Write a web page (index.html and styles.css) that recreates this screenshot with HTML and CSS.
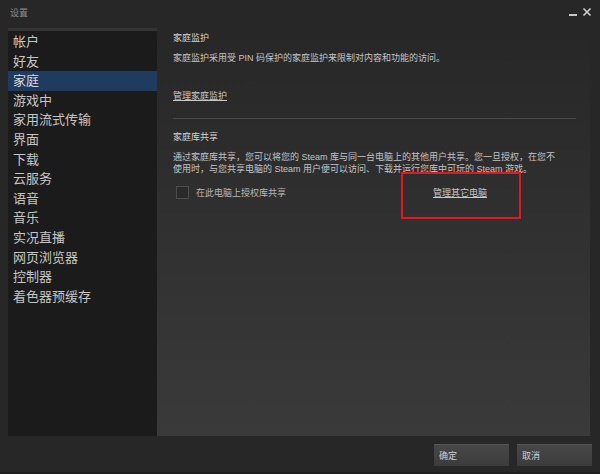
FILE: index.html
```html
<!DOCTYPE html>
<html lang="zh-CN">
<head>
<meta charset="utf-8">
<title>设置</title>
<link rel="stylesheet" href="styles.css">
</head>
<body>
<div class="window">
  <div class="titlebar">
    <span class="title">设置</span>
    <div class="controls">
      <svg class="ctl" width="10" height="10" viewBox="0 0 10 10"><rect x="1" y="7" width="8" height="2" fill="#c8c8c8"/></svg>
      <svg class="ctl" width="10" height="10" viewBox="0 0 10 10"><path d="M1.5 1.5 L8.5 8.5 M8.5 1.5 L1.5 8.5" stroke="#d0d0d0" stroke-width="1.6"/></svg>
    </div>
  </div>
  <div class="main">
    <nav class="sidebar">
      <div class="nav-item">帐户</div>
      <div class="nav-item">好友</div>
      <div class="nav-item active">家庭</div>
      <div class="nav-item">游戏中</div>
      <div class="nav-item">家用流式传输</div>
      <div class="nav-item">界面</div>
      <div class="nav-item">下载</div>
      <div class="nav-item">云服务</div>
      <div class="nav-item">语音</div>
      <div class="nav-item">音乐</div>
      <div class="nav-item">实况直播</div>
      <div class="nav-item">网页浏览器</div>
      <div class="nav-item">控制器</div>
      <div class="nav-item">着色器预缓存</div>
    </nav>
    <section class="content">
      <h2 class="heading">家庭监护</h2>
      <p class="text">家庭监护采用受 PIN 码保护的家庭监护来限制对内容和功能的访问。</p>
      <a class="link link-first">管理家庭监护</a>
      <div class="divider"></div>
      <h2 class="heading">家庭库共享</h2>
      <p class="text para">通过家庭库共享，您可以将您的 Steam 库与同一台电脑上的其他用户共享。您一旦授权，在您不使用时，与您共享电脑的 Steam 用户便可以访问、下载并运行您库中可玩的 Steam 游戏。</p>
      <div class="share-row">
        <label class="check-label"><span class="checkbox"></span>在此电脑上授权库共享</label>
        <a class="link">管理其它电脑</a>
      </div>
      <div class="highlight-box"></div>
    </section>
  </div>
  <div class="footer">
    <button class="btn">确定</button>
    <button class="btn">取消</button>
  </div>
</div>
</body>
</html>
```
FILE: styles.css
```css
html, body {
  margin: 0;
  padding: 0;
  background: #1c2229;
}
body {
  width: 600px;
  height: 474px;
  overflow: hidden;
  font-family: "Liberation Sans", "Noto Sans CJK SC", sans-serif;
}
.window {
  width: 600px;
  height: 472px;
  background: #272727;
  display: flex;
  flex-direction: column;
  border-bottom: 2px solid #1f1f1f;
}
.titlebar {
  height: 28px;
  display: flex;
  align-items: flex-start;
  justify-content: space-between;
  flex-shrink: 0;
}
.title {
  font-size: 9px;
  line-height: 12px;
  color: #8c8c8c;
  margin: 7px 0 0 10px;
}
.controls {
  display: flex;
  gap: 4px;
  margin: 7px 8px 0 0;
}
.ctl { display: block; }
.main {
  flex: 1;
  display: flex;
  margin: 0 10px 0 8px;
  min-height: 0;
}
.sidebar {
  width: 149px;
  background: #1b1b1b;
  border-top: 3px solid #343434;
  padding-top: 1px;
  box-sizing: border-box;
  flex-shrink: 0;
}
.nav-item {
  height: 19.6px;
  line-height: 19.6px;
  font-size: 13px;
  color: #c6c6c6;
  padding-left: 5px;
  white-space: nowrap;
}
.nav-item.active {
  background: #1f3c60;
  color: #d8d8d8;
}
.content {
  flex: 1;
  position: relative;
  background: linear-gradient(#272727, #3a3a3a);
  padding: 4px 14px 0 16px;
  color: #c4c4c4;
  font-size: 9px;
  line-height: 12px;
}
.heading {
  margin: 0;
  font-size: 9px;
  line-height: 12px;
  font-weight: normal;
  color: #d2d2d2;
}
.text {
  margin: 8px 0 0;
}
.link {
  display: inline-block;
  text-decoration: underline;
  color: #c8c8c8;
}
.link-first {
  margin-top: 26px;
}
.divider {
  height: 1px;
  background: #4a4a4a;
  margin: 16px 0 12px;
}
.para {
  margin-top: 8px;
  width: 384px;
}
.share-row {
  display: flex;
  align-items: center;
  margin-top: 11px;
}
.check-label {
  width: 260px;
  display: flex;
  align-items: center;
  color: #b8b8b8;
}
.checkbox {
  width: 11px;
  height: 11px;
  border: 1px solid #4c4c4c;
  background: #2a2a2a;
  margin: 0 7px 0 3px;
}
.highlight-box {
  position: absolute;
  left: 244px;
  top: 144px;
  width: 116px;
  height: 43px;
  border: 2px solid #e5161d;
}
.footer {
  height: 36px;
  flex-shrink: 0;
  display: flex;
  justify-content: flex-end;
  align-items: flex-start;
  gap: 8px;
  padding: 8px 8px 0 0;
  box-sizing: border-box;
}
.btn {
  width: 75px;
  height: 22px;
  border: none;
  border-top: 1px solid #555;
  background: linear-gradient(#474747, #3c3c3c);
  color: #d0d0d0;
  font-family: "Liberation Sans", "Noto Sans CJK SC", sans-serif;
  font-size: 9px;
  text-align: left;
  padding: 0 5px;
}
```
